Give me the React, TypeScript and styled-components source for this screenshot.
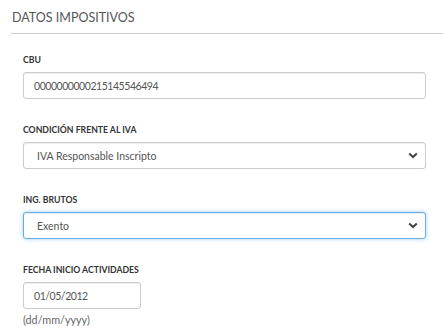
import React from "react";
import styled, { createGlobalStyle } from "styled-components";

const GlobalStyle = createGlobalStyle`
  html, body {
    margin: 0;
    padding: 0;
    background: #fff;
    font-family: Lato, "Liberation Sans", sans-serif;
  }
`;

const Section = styled.section`
  width: 443px;
  padding: 10px 0 0 11px;
  box-sizing: border-box;
`;

const Heading = styled.h3`
  margin: 0;
  padding: 0 0 8px 1px;
  font-size: 12.5px;
  font-weight: 400;
  line-height: 15px;
  color: #555;
  border-bottom: 1px solid #cfcfcf;
`;

const Fields = styled.div`
  display: flex;
  flex-direction: column;
  gap: 26px;
  padding: 21px 17px 0 12px;
`;

const Field = styled.div`
  display: flex;
  flex-direction: column;
`;

const Label = styled.label`
  font-size: 8.7px;
  font-weight: 700;
  line-height: 10px;
  color: #333;
  margin-bottom: 7px;
`;

const Box = styled.div<{ $focused?: boolean; $width?: string; $numeric?: boolean }>`
  display: flex;
  align-items: center;
  justify-content: space-between;
  box-sizing: border-box;
  height: 27px;
  width: ${(p) => p.$width || "100%"};
  padding: 0 7px 0 10px;
  border: 1px solid ${(p) => (p.$focused ? "#66afe9" : "#cccccc")};
  border-radius: 3px;
  background: #fff;
  box-shadow: ${(p) =>
    p.$focused
      ? "inset 0 1px 1px rgba(0,0,0,.075), 0 0 4px rgba(102,175,233,.6)"
      : "inset 0 1px 1px rgba(0,0,0,.075)"};
  font-size: 10.5px;
  letter-spacing: ${(p) => (p.$numeric ? "-0.45px" : "0")};
  color: #555;
`;

const SelectText = styled.span`
  padding-left: 3px;
`;

const Hint = styled.div`
  font-size: 10.8px;
  color: #666;
  margin-top: 4px;
`;

const Chevron = () => (
  <svg width="10" height="7" viewBox="0 0 10 7">
    <path d="M1.2 1.4 L5 5 L8.8 1.4" fill="none" stroke="#444" strokeWidth="2" />
  </svg>
);

export default function App() {
  return (
    <>
      <GlobalStyle />
      <Section>
        <Heading>DATOS IMPOSITIVOS</Heading>
        <Fields>
          <Field>
            <Label>CBU</Label>
            <Box $numeric>0000000000215145546494</Box>
          </Field>
          <Field>
            <Label>CONDICIÓN FRENTE AL IVA</Label>
            <Box>
              <SelectText>IVA Responsable Inscripto</SelectText>
              <Chevron />
            </Box>
          </Field>
          <Field>
            <Label>ING. BRUTOS</Label>
            <Box $focused>
              <SelectText>Exento</SelectText>
              <Chevron />
            </Box>
          </Field>
          <Field>
            <Label>FECHA INICIO ACTIVIDADES</Label>
            <Box $width="118px" $numeric>01/05/2012</Box>
            <Hint>(dd/mm/yyyy)</Hint>
          </Field>
        </Fields>
      </Section>
    </>
  );
}
